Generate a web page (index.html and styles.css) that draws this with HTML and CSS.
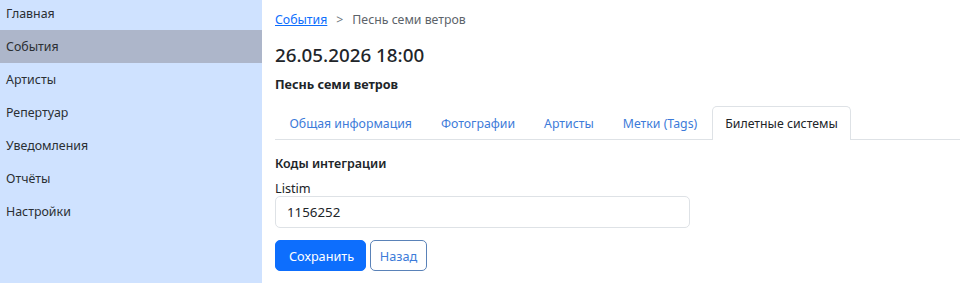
FILE: index.html
```html
<!DOCTYPE html>
<html lang="ru">
<head>
<meta charset="utf-8">
<link rel="stylesheet" href="styles.css">
</head>
<body>
<div class="layout">
  <aside class="sidebar">
    <nav class="menu">
      <a class="menu-item">Главная</a>
      <a class="menu-item active">События</a>
      <a class="menu-item">Артисты</a>
      <a class="menu-item">Репертуар</a>
      <a class="menu-item">Уведомления</a>
      <a class="menu-item">Отчёты</a>
      <a class="menu-item">Настройки</a>
    </nav>
  </aside>
  <main class="content">
    <div class="breadcrumb">
      <a class="crumb-link" href="#">События</a>
      <span class="crumb-sep">&gt;</span>
      <span class="crumb-current">Песнь семи ветров</span>
    </div>
    <h1 class="title">26.05.2026 18:00</h1>
    <div class="subtitle">Песнь семи ветров</div>
    <ul class="tabs">
      <li class="tab">Общая информация</li>
      <li class="tab">Фотографии</li>
      <li class="tab">Артисты</li>
      <li class="tab">Метки (Tags)</li>
      <li class="tab active">Билетные системы</li>
    </ul>
    <section class="form">
      <div class="section-title">Коды интеграции</div>
      <label class="label">Listim</label>
      <div class="input">1156252</div>
      <div class="actions">
        <button class="btn btn-primary">Сохранить</button>
        <button class="btn btn-outline">Назад</button>
      </div>
    </section>
  </main>
</div>
</body>
</html>
```

FILE: styles.css
```css
* { box-sizing: border-box; }
html, body { margin: 0; padding: 0; }
body {
  font-family: "Noto Sans", "Open Sans", sans-serif;
  font-size: 12.7px;
  color: #212529;
  background: #fff;
  overflow: hidden;
}
.layout { display: flex; height: 283px; }
.sidebar {
  width: 262px;
  flex: none;
  background: #cfe2ff;
}
.menu { display: flex; flex-direction: column; margin-top: -3px; }
.menu-item {
  display: flex;
  align-items: center;
  height: 33px;
  padding-left: 6px;
  font-size: 12.4px;
  color: #2b2f33;
  text-decoration: none;
}
.menu-item.active { background: #adb6ca; }
.content {
  flex: 1;
  padding-left: 13px;
  padding-top: 10px;
}
.breadcrumb { display: flex; gap: 9px; line-height: 20px; color: #5c636a; font-size: 12.3px; }
.crumb-link { color: #0d6efd; text-decoration: underline; }
.crumb-sep { color: #6c757d; }
.title {
  margin: 11px 0 0;
  font-size: 18.8px;
  font-weight: 500;
  line-height: 28px;
  color: #212529;
}
.subtitle {
  margin-top: 6px;
  font-weight: 700;
  font-size: 12.6px;
  line-height: 20px;
}
.tabs {
  list-style: none;
  margin: 11px 0 0;
  padding: 0;
  display: flex;
  border-bottom: 1px solid #dee2e6;
  font-size: 12.3px;
}
.tab {
  padding: 0 13.5px;
  height: 33px;
  line-height: 33px;
  color: #3d7bd9;
  border: 1px solid transparent;
  border-bottom: none;
  margin-bottom: -1px;
}
.tab.active {
  color: #212529;
  background: #fff;
  border-color: #dee2e6;
  border-radius: 5px 5px 0 0;
  height: 34px;
  padding: 0 12.5px;
}
.form { padding-top: 14px; }
.section-title { font-weight: 600; font-size: 12.5px; line-height: 20px; color: #212529; }
.label { display: block; margin-top: 4px; line-height: 20px; color: #212529; }
.input {
  margin-top: -2px;
  width: 415px;
  height: 32px;
  border: 1px solid #dee2e6;
  border-radius: 5px;
  padding: 0 11px;
  display: flex;
  align-items: center;
  font-size: 13.3px;
  color: #212529;
}
.actions { display: flex; gap: 4px; margin-top: 12px; }
.btn {
  font-family: inherit;
  font-size: 12.7px;
  height: 31px;
  padding: 0 13px;
  border-radius: 5px;
  border: 1px solid transparent;
  cursor: pointer;
}
.btn-primary { background: #0d6efd; color: #fff; border-color: #0d6efd; width: 91px; }
.btn-outline { background: #fff; color: #3d7bd9; border-color: #5a82b8; width: 57px; padding: 0; }
```
